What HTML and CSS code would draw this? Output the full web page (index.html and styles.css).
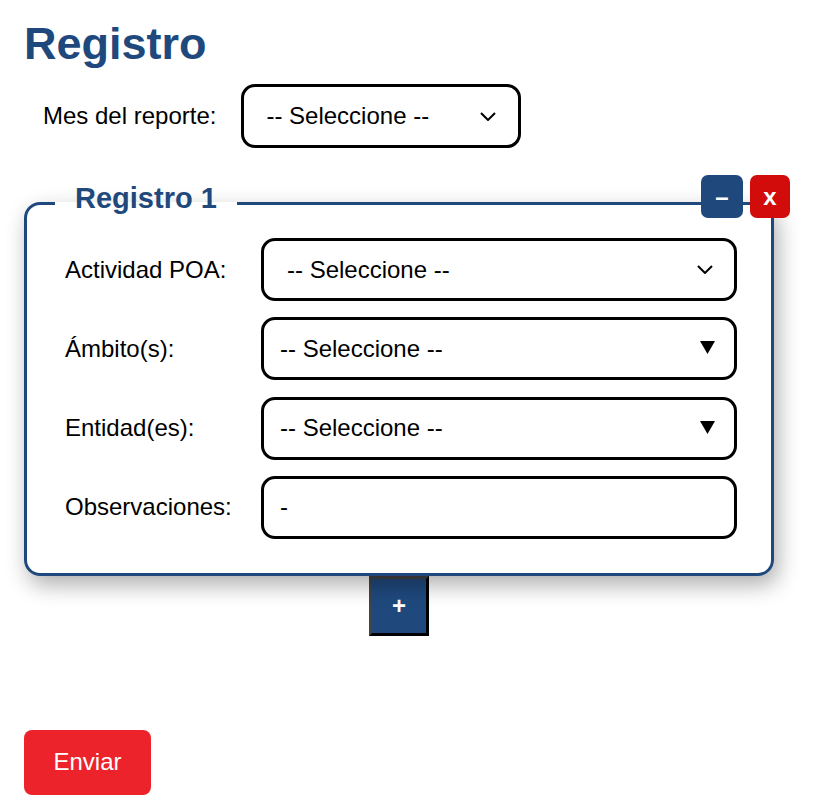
FILE: index.html
```html
<!DOCTYPE html>
<html lang="es">
<head>
<meta charset="utf-8">
<title>Registro</title>
<link rel="stylesheet" href="styles.css">
</head>
<body>
<main class="page">
  <h1 class="title">Registro</h1>
  <div class="month-row">
    <label class="month-label">Mes del reporte:</label>
    <div class="select select--month">
      <span>-- Seleccione --</span>
      <svg class="chevron" width="16" height="9" viewBox="0 0 16 9"><path d="M1 1l7 7 7-7" fill="none" stroke="#000" stroke-width="2"/></svg>
    </div>
  </div>

  <div class="record-wrap">
    <fieldset class="record">
      <legend class="record-legend">Registro 1</legend>
      <div class="record-grid">
        <label class="field-label">Actividad POA:</label>
        <div class="select select--native">
          <span>-- Seleccione --</span>
          <svg class="chevron" width="16" height="9" viewBox="0 0 16 9"><path d="M1 1l7 7 7-7" fill="none" stroke="#000" stroke-width="2"/></svg>
        </div>

        <label class="field-label">Ámbito(s):</label>
        <div class="select select--multi">
          <span>-- Seleccione --</span>
          <svg class="tri" width="15" height="13" viewBox="0 0 15 13"><path d="M0 0h15L7.5 13z" fill="#000"/></svg>
        </div>

        <label class="field-label">Entidad(es):</label>
        <div class="select select--multi">
          <span>-- Seleccione --</span>
          <svg class="tri" width="15" height="13" viewBox="0 0 15 13"><path d="M0 0h15L7.5 13z" fill="#000"/></svg>
        </div>

        <label class="field-label">Observaciones:</label>
        <div class="select select--input"><span>-</span></div>
      </div>
    </fieldset>
    <div class="record-actions">
      <button class="btn-min" type="button">–</button>
      <button class="btn-close" type="button">x</button>
    </div>
  </div>

  <div class="add-row">
    <button class="btn-add" type="button">+</button>
  </div>

  <button class="btn-send" type="button">Enviar</button>
</main>
</body>
</html>
```

FILE: styles.css
```css
* { box-sizing: border-box; }

body {
  margin: 0;
  font-family: "Liberation Sans", Arial, sans-serif;
  color: #000;
  background: #fff;
}

.page {
  width: 798px;
  padding: 0 24px;
}

.title {
  margin: 18px 0 14px 0;
  font-size: 45px;
  font-weight: bold;
  color: #1f497d;
  line-height: normal;
}

.month-row {
  display: flex;
  align-items: center;
  padding-left: 19px;
  gap: 25px;
}

.month-label {
  font-size: 24px;
}

.select {
  display: flex;
  align-items: center;
  justify-content: space-between;
  height: 63px;
  border: 3px solid #000;
  border-radius: 14px;
  font-size: 24px;
  background: #fff;
}

.select--month {
  width: 280px;
  height: 64px;
  padding: 0 22px 0 22px;
}

.select--native {
  padding: 0 21px 0 23px;
}

.select--multi {
  padding: 0 19px 0 16px;
}

.select--input {
  padding: 0 16px;
}

.chevron { display: block; }
.tri { display: block; margin-top: -2px; }

.record-wrap {
  position: relative;
  margin-top: 34px;
  width: 750px;
}

.record {
  margin: 0;
  min-width: 0;
  border: 3px solid #1f497d;
  border-radius: 16px;
  padding: 13px 34px 34px 38px;
  box-shadow: 4px 9px 22px rgba(0, 0, 0, 0.32);
  background: #fff;
}

.record-legend {
  margin-left: -10px;
  padding: 0 20px 10px;
  font-size: 29px;
  font-weight: bold;
  color: #1f497d;
  line-height: normal;
}

.record-grid {
  display: grid;
  grid-template-columns: 196px 1fr;
  row-gap: 16.33px;
  align-items: center;
}

.field-label {
  font-size: 24px;
}

.record-actions {
  position: absolute;
  top: -7px;
  right: -16px;
  display: flex;
  gap: 7px;
}

.btn-min,
.btn-close {
  height: 43px;
  border: none;
  border-radius: 7px;
  color: #fff;
  font-family: "Liberation Sans", Arial, sans-serif;
  font-weight: bold;
  font-size: 24px;
  padding: 0;
  line-height: 1;
}

.btn-min {
  width: 42px;
  background: #1f497d;
}

.btn-close {
  width: 40px;
  background: #d20b0b;
}

.add-row {
  display: flex;
  justify-content: center;
  width: 750px;
}

.btn-add {
  width: 60px;
  height: 60px;
  padding: 0;
  border: 3px solid;
  border-color: #444 #000 #000 #444;
  background: #1f497d;
  color: #fff;
  font-family: "Liberation Sans", Arial, sans-serif;
  font-weight: bold;
  font-size: 24px;
}

.btn-send {
  display: block;
  margin-top: 94px;
  width: 127px;
  height: 65px;
  border: none;
  border-radius: 8px;
  background: #ec232b;
  color: #fff;
  font-family: "Liberation Sans", Arial, sans-serif;
  font-size: 24px;
  padding: 0;
}
```
